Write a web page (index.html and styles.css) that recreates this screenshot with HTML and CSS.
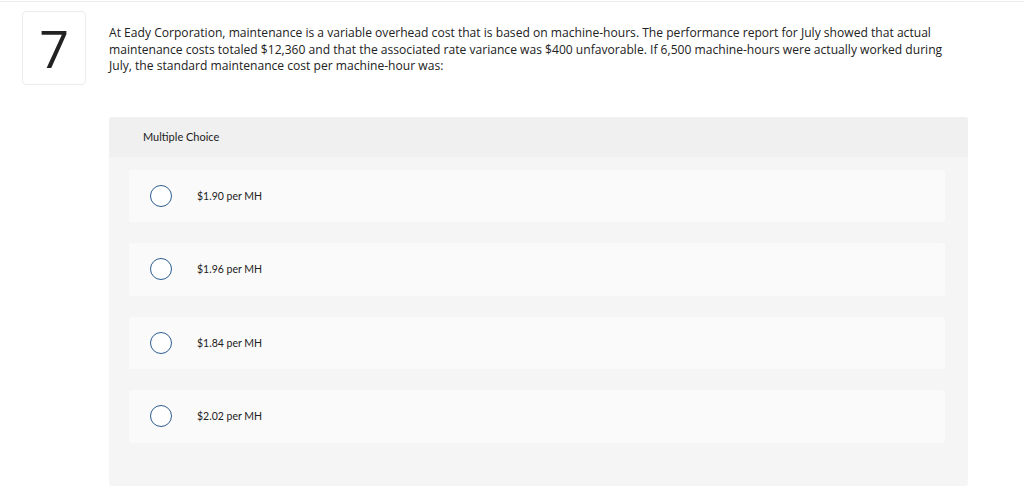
FILE: index.html
```html
<!DOCTYPE html>
<html>
<head>
<meta charset="utf-8">
<link rel="stylesheet" href="styles.css">
</head>
<body>
<div class="page">
  <div class="question">
    <div class="num">7</div>
    <div class="content">
      <p class="prompt">At Eady Corporation, maintenance is a variable overhead cost that is based on machine-hours. The performance report for July showed that actual maintenance costs totaled $12,360 and that the associated rate variance was $400 unfavorable. If 6,500 machine-hours were actually worked during July, the standard maintenance cost per machine-hour was:</p>
      <div class="panel">
        <div class="panel-head">Multiple Choice</div>
        <div class="options">
          <div class="option"><span class="radio"></span><span class="label">$1.90 per MH</span></div>
          <div class="option"><span class="radio"></span><span class="label">$1.96 per MH</span></div>
          <div class="option"><span class="radio"></span><span class="label">$1.84 per MH</span></div>
          <div class="option"><span class="radio"></span><span class="label">$2.02 per MH</span></div>
        </div>
      </div>
    </div>
  </div>
</div>
</body>
</html>
```
FILE: styles.css
```css
* { box-sizing: border-box; }
html, body { margin: 0; padding: 0; background: #fff; }
body { font-family: Lato, "Open Sans", Arial, sans-serif; color: #222; }
.page { border-top: 1px solid #ececec; margin-top: 1px; padding: 8px 0 0 22px; }
.question { display: flex; align-items: flex-start; gap: 23px; }
.num {
  flex: none; width: 64px; height: 74px; margin-top: 1px;
  border: 1px solid #ececec; border-radius: 4px;
  display: flex; align-items: center; justify-content: center;
  font-family: "Open Sans", sans-serif; font-size: 52px; font-weight: 400; color: #222;
  line-height: 1;
}
.content { width: 859px; }
.prompt { margin: 15px 0 0; max-width: 850px; font-family: "Open Sans", sans-serif; font-size: 12.1px; line-height: 16.5px; color: #222; }
.panel { margin-top: 42px; background: #f5f5f5; border-radius: 3px; height: 369px; }
.panel-head { height: 40px; background: #f0f0f0; border-radius: 3px 3px 0 0; padding-left: 34px; display: flex; align-items: center; font-size: 11px; color: #222; }
.options { padding: 13px 23px 0 20px; display: flex; flex-direction: column; gap: 21px; }
.option { height: 52.5px; background: #fafafa; border-radius: 3px; display: flex; align-items: center; padding-left: 21px; }
.radio { width: 22px; height: 22px; border: 1px solid #2d5c92; border-radius: 50%; background: #fff; flex: none; }
.label { margin-left: 25px; font-size: 10.5px; color: #222; }
```
